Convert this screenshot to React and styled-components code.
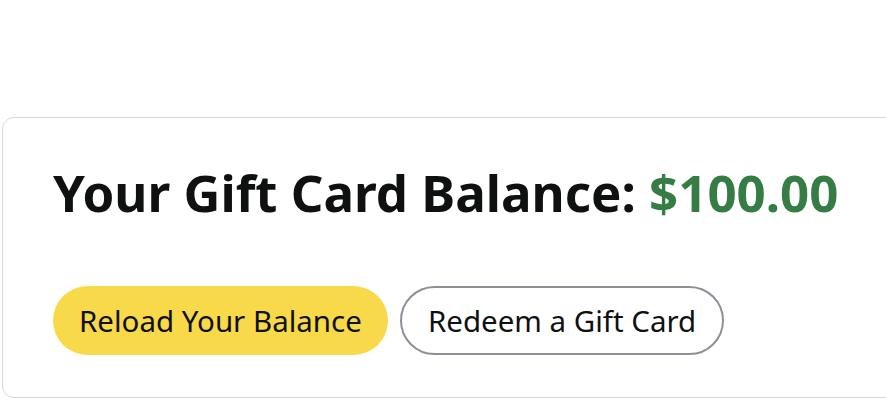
import React from 'react';
import styled, { createGlobalStyle } from 'styled-components';

const GlobalStyle = createGlobalStyle`
  html, body {
    margin: 0;
    padding: 0;
    background: #ffffff;
    overflow: hidden;
  }
  body {
    font-family: "Noto Sans", "Open Sans", Arial, sans-serif;
    color: #0f1111;
  }
`;

const Page = styled.div`
  padding: 117px 0 0 2px;
  width: 886px;
  height: 416px;
  box-sizing: border-box;
`;

const Card = styled.section`
  width: 920px;
  box-sizing: border-box;
  border: 1.5px solid #d5d9d9;
  border-radius: 12px;
  padding: 44px 50px 42px;
`;

const Title = styled.h1`
  margin: 0;
  font-size: 51px;
  line-height: 60px;
  font-weight: 700;
  color: #0f1111;
`;

const Amount = styled.span`
  color: #357d45;
`;

const Actions = styled.div`
  display: flex;
  gap: 12px;
  margin-top: 64px;
`;

const PillButton = styled.button`
  height: 69px;
  padding: 0 26px;
  border-radius: 35px;
  font-family: inherit;
  font-size: 29.5px;
  color: #0f1111;
  cursor: pointer;
  box-sizing: border-box;
  background: ${({ $primary }) => ($primary ? '#f8d94a' : '#ffffff')};
  border: ${({ $primary }) => ($primary ? 'none' : '2px solid #8d9096')};
`;

export default function App() {
  return (
    <>
      <GlobalStyle />
      <Page>
        <Card>
          <Title>
            Your Gift Card Balance: <Amount>$100.00</Amount>
          </Title>
          <Actions>
            <PillButton $primary>Reload Your Balance</PillButton>
            <PillButton>Redeem a Gift Card</PillButton>
          </Actions>
        </Card>
      </Page>
    </>
  );
}
